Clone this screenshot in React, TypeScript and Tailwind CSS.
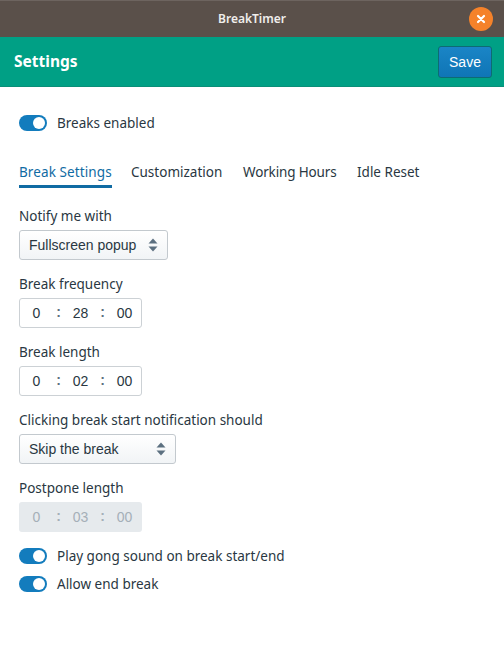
const uiFont = "font-['Noto_Sans',sans-serif]"
const inputFont = "font-['Liberation_Sans',sans-serif]"

function Toggle({ label, className = '' }: { label: string; className?: string }) {
	return (
		<div className={`flex items-center h-4 gap-[10px] ${className}`}>
			<div className="relative w-[28px] h-4 rounded-full bg-[#137cbd]">
				<div className="absolute right-[2px] top-[2px] size-3 rounded-full bg-white"></div>
			</div>
			<span className="text-[13.5px] leading-4 text-[#293742]">{label}</span>
		</div>
	)
}

function SelectBox({ value, width }: { value: string; width: string }) {
	return (
		<div className={`flex items-center justify-between h-[30px] pl-[9px] pr-[8px] rounded-[3px] border border-[#c3c9ce] bg-gradient-to-b from-white to-[#f1f4f6] ${width}`}>
			<span className={`${inputFont} text-[14px] text-[#293742]`}>{value}</span>
			<svg width="10" height="14" viewBox="0 0 10 14" className="mr-[1px]">
				<path d="M5 0.5 L9.5 5.5 H0.5 Z" fill="#5c7080" />
				<path d="M5 13.5 L9.5 8.5 H0.5 Z" fill="#5c7080" />
			</svg>
		</div>
	)
}

function TimeBox({ h, m, s, disabled = false }: { h: string; m: string; s: string; disabled?: boolean }) {
	const box = disabled ? 'bg-[#e6eaed] text-[#a5afb8]' : 'bg-white border border-[#ccd1d5] text-[#293742]'
	const dots = disabled ? 'text-[#a5afb8]' : 'text-[#5c7080]'
	return (
		<div className={`${inputFont} ${box} flex items-center justify-center w-[123px] h-[30px] rounded-[3px] text-[14px]`}>
			<span className="w-[28px] text-center">{h}</span>
			<span className={`${dots} w-[16px] text-center font-bold -mt-[2px]`}>:</span>
			<span className="w-[28px] text-center">{m}</span>
			<span className={`${dots} w-[16px] text-center font-bold -mt-[2px]`}>:</span>
			<span className="w-[28px] text-center">{s}</span>
		</div>
	)
}

function Field({ label, children }: { label: string; children: React.ReactNode }) {
	return (
		<div className="flex flex-col mb-[15px]">
			<label className="text-[13.5px] leading-[18px] mb-[5px] text-[#293742]">{label}</label>
			{children}
		</div>
	)
}

export default function App() {
	return (
		<div className={`${uiFont} w-[504px] h-[664px] bg-white flex flex-col overflow-hidden`}>
			<div className="relative flex items-center justify-center h-[37px] bg-[#5a504a] border-t border-[#6d645f]">
				<span className="text-[12px] font-semibold text-[#f0eeec]">BreakTimer</span>
				<div className="absolute right-[11px] top-[6px] size-6 rounded-full bg-[#f5822a] flex items-center justify-center">
					<svg width="10" height="10" viewBox="0 0 10 10">
						<path d="M2 2 L8 8 M8 2 L2 8" stroke="white" strokeWidth="2.2" strokeLinecap="round" />
					</svg>
				</div>
			</div>

			<div className="flex items-center justify-between h-[50px] pt-[1px] pl-[14px] pr-[12px] bg-[#00a085] border-b border-[#0a8f78]">
				<span className="text-[15.5px] font-bold text-white">Settings</span>
				<button className={`${inputFont} w-[54px] h-[32px] rounded-[3px] border border-[#0d6b74] bg-gradient-to-b from-[#1a85c6] to-[#0f75b6] text-[14px] text-white`}>Save</button>
			</div>

			<div className="flex flex-col px-[19px] pt-[28px]">
				<Toggle label="Breaks enabled" />

				<div className="flex gap-[20px] mt-[28px] mb-[19px] text-[13.5px] text-[#293742] whitespace-nowrap">
					<div className="w-[93px] h-[29px] border-b-[3px] border-[#106ba3] text-[#106ba3] tracking-[0.1px] leading-[26px]">Break Settings</div>
					<div className="w-[91px] -ml-[1px] leading-[26px]">Customization</div>
					<div className="w-[94px] ml-[1px] tracking-[-0.15px] leading-[26px]">Working Hours</div>
					<div className="leading-[26px]">Idle Reset</div>
				</div>

				<Field label="Notify me with">
					<SelectBox value="Fullscreen popup" width="w-[149px]" />
				</Field>
				<Field label="Break frequency">
					<TimeBox h="0" m="28" s="00" />
				</Field>
				<Field label="Break length">
					<TimeBox h="0" m="02" s="00" />
				</Field>
				<Field label="Clicking break start notification should">
					<SelectBox value="Skip the break" width="w-[157px]" />
				</Field>
				<Field label="Postpone length">
					<TimeBox h="0" m="03" s="00" disabled />
				</Field>

				<Toggle label="Play gong sound on break start/end" className="mt-[1px]" />
				<Toggle label="Allow end break" className="mt-[12px]" />
			</div>
		</div>
	)
}
